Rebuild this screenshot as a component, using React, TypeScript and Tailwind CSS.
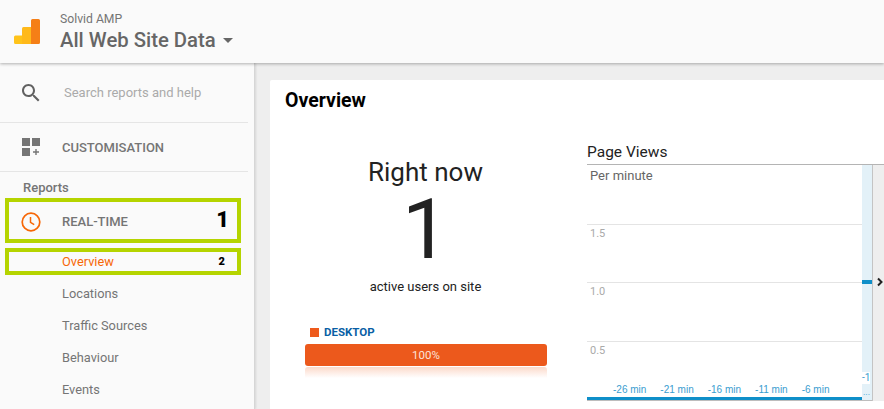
import React from 'react';

const subItems = ['Locations', 'Traffic Sources', 'Behaviour', 'Events'];
const ticks = ['-26 min', '-21 min', '-16 min', '-11 min', '-6 min'];

const Logo = () => (
  <svg width="26" height="26" viewBox="0 0 26 26" className="shrink-0">
    <path d="M0 18a1.500 1.500 0 0 1 1.500-1.500H9V25H1.500A1.500 1.500 0 0 1 0 23.500z" fill="#ffc31a" />
    <path d="M8 9.500A1.500 1.500 0 0 1 9.500 8H17v17H8z" fill="#ffb91a" />
    <path d="M17 1.500A1.500 1.500 0 0 1 18.500 0h6A1.500 1.500 0 0 1 26 1.500v22a1.500 1.500 0 0 1-1.500 1.500H17z" fill="#f57f17" />
  </svg>
);

const SearchIcon = () => (
  <svg width="24" height="24" viewBox="0 0 24 24" fill="#616161" className="shrink-0">
    <path d="M15.500 14h-.79l-.28-.27C15.410 12.590 16 11.110 16 9.500 16 5.910 13.090 3 9.500 3S3 5.910 3 9.500 5.910 16 9.500 16c1.610 0 3.090-.59 4.230-1.570l.27.28v.79l5 4.990L20.490 19l-4.990-5zm-6 0C7.010 14 5 11.990 5 9.500S7.010 5 9.500 5 14 7.010 14 9.500 11.990 14 9.500 14z" />
  </svg>
);

const CustomIcon = () => (
  <svg width="18" height="18" viewBox="0 0 18 18" className="shrink-0">
    <rect x="0" y="0" width="8" height="8" fill="#757575" />
    <rect x="10" y="0" width="8" height="8" fill="#757575" />
    <rect x="0" y="10" width="8" height="8" fill="#757575" />
    <path d="M13.300 11h1.400v2.300H17v1.400h-2.300V17h-1.400v-2.300H11v-1.400h2.300z" fill="#757575" />
  </svg>
);

const ClockIcon = () => (
  <svg width="20" height="20" viewBox="0 0 20 20" fill="none" stroke="#f76707" className="shrink-0">
    <circle cx="10" cy="10" r="8.800" strokeWidth="1.700" />
    <path d="M9.500 5v5.300l3.700 2.300" strokeWidth="1.500" />
  </svg>
);

const Chart = () => (
  <div className="relative flex-1 min-w-0 h-[236px] border-b border-b-[#bdbdbd] bg-white">
    <span className="absolute left-[3px] top-[3px] text-[13px] leading-4 text-[#666]">Per minute</span>
    {[
      { top: 59, label: '1.5' },
      { top: 117, label: '1.0' },
      { top: 176, label: '0.5' },
    ].map((g) => (
      <div key={g.label} className="absolute left-0 right-0 border-t border-[#e4e4e4]" style={{ top: g.top }}>
        <span className="absolute left-[3px] top-[1px] text-[11px] leading-4 text-[#aaa]">{g.label}</span>
      </div>
    ))}
    <div className="absolute right-0 top-0 bottom-0 w-[10px] bg-[#e3f1f8]">
      <div className="absolute left-0 right-0 top-[115px] h-1 bg-[#0f8fc9]" />
      <span className="absolute left-0 top-[207px] bg-white text-[10px] leading-3 text-[#3a9dd0]">-1</span>
      <span className="absolute left-[1px] top-[221px] text-[9px] leading-3 text-[#3a9dd0]">...</span>
    </div>
    <div className="absolute left-[26px] bottom-[4px] flex gap-[14px] text-[10px] leading-3 text-[#3a9dd0] font-['Liberation_Sans',sans-serif]">
      {ticks.map((t) => (
        <span key={t}>{t}</span>
      ))}
    </div>
    <div className="absolute left-0 right-[10px] bottom-0 h-[3px] bg-[#0f8fc9]" />
  </div>
);

export default function App() {
  return (
    <div className="w-[884px] h-[409px] overflow-hidden flex flex-col bg-[#eeeeee] font-['Roboto',sans-serif]">
      <header className="relative z-10 h-[63px] shrink-0 flex items-center pl-[14px] gap-[20px] bg-[#fafafa] shadow-[0_1px_3px_rgba(0,0,0,0.3)]">
        <Logo />
        <div className="flex flex-col mt-[1px]">
          <span className="text-[12.200px] leading-[14px] text-[#757575]">Solvid AMP</span>
          <div className="flex items-center gap-[7px] mt-[2px]">
            <span className="text-[20.300px] leading-6 font-medium text-[#666]">All Web Site Data</span>
            <span className="mt-[1px] w-0 h-0 border-x-[5px] border-x-transparent border-t-[5px] border-t-[#666]" />
          </div>
        </div>
      </header>

      <div className="flex flex-1 min-h-0">
        <aside className="w-[255px] shrink-0 bg-[#fafafa] border-r border-[#d6d6d6] shadow-[1px_0_2px_rgba(0,0,0,0.1)]">
          <div className="h-[60px] flex items-center pl-[19px] gap-[21px] border-b border-[#e5e5e5] mr-[6px]">
            <SearchIcon />
            <span className="text-[13px] text-[#aaa]">Search reports and help</span>
          </div>
          <div className="h-[49px] flex items-center pl-[22px] gap-[22px] border-b border-[#e5e5e5] mr-[6px]">
            <CustomIcon />
            <span className="mt-[2px] text-[13px] font-medium text-[#757575]">CUSTOMISATION</span>
          </div>
          <div className="pl-[23px] pt-[8px] text-[13px] leading-4 font-medium text-[#757575]">Reports</div>
          <div className="ml-[5px] w-[236px] mt-[2px] h-[45px] flex items-center border-4 border-[#b5d400] pl-[12px] pr-[8px]">
            <span className="mt-[2px]">
              <ClockIcon />
            </span>
            <span className="ml-[21px] mt-[2px] text-[13px] font-medium text-[#757575]">REAL-TIME</span>
            <span className="ml-auto mb-[2px] text-[22px] leading-6 font-black text-black">1</span>
          </div>
          <div className="ml-[5px] w-[236px] mt-[5px] h-[27px] flex items-center border-4 border-[#b5d400] pl-[53px] pr-[12px]">
            <span className="text-[12.800px] text-[#f76707]">Overview</span>
            <span className="ml-auto text-[11px] leading-3 font-black text-black">2</span>
          </div>
          <div className="pl-[62px] pt-[3px]">
            {subItems.map((s) => (
              <div key={s} className="h-[32px] flex items-center text-[12.800px] text-[#757575]">
                {s}
              </div>
            ))}
          </div>
        </aside>

        <main className="flex-1 min-w-0 pl-[15px] pt-[17px]">
          <div className="h-[340px] bg-white rounded-tl-[2px] flex flex-col">
            <h1 className="pl-[15px] pt-[10px] text-[19.500px] leading-[22px] font-bold text-black">Overview</h1>
            <div className="flex mt-[25px]">
              <section className="w-[317px] shrink-0 flex flex-col">
                <div className="w-[311px] mt-[19px] text-center text-[26px] leading-8 text-[#222]">Right now</div>
                <div className="w-[311px] text-center text-[84px] leading-[84px] text-[#222]">1</div>
                <div className="w-[311px] mt-[7px] text-center text-[13px] leading-4 text-[#222]">active users on site</div>
                <div className="mt-[31px] ml-[40px] flex items-center gap-[5px]">
                  <span className="w-[9px] h-[9px] bg-[#ee5a1c]" />
                  <span className="text-[11.500px] leading-3 font-bold text-[#0a5fa5]">DESKTOP</span>
                </div>
                <div className="relative ml-[35px] mt-[6px] w-[242px] h-[22px] rounded-[3px] bg-[#ec591c] text-center text-[11.500px] leading-[22px] text-[#fbe3d8]">
                  100%
                  <div className="absolute left-0 right-0 top-[23px] h-[11px] rounded-t-[3px] bg-gradient-to-b from-[#fbd9ca] to-white" />
                </div>
              </section>
              <section className="flex-1 min-w-0 mt-[5px]">
                <div className="text-[15.500px] leading-5 text-[#222] mb-[2px]">Page Views</div>
                <div className="flex border-t border-[#b4b4b4]">
                  <Chart />
                  <div className="w-[12px] shrink-0 bg-[#eeeeee] border-l border-[#c4c4c4] pl-[3px] pt-[112px]">
                    <svg width="8" height="10" viewBox="0 0 8 10" fill="none" stroke="#222" strokeWidth="2">
                      <path d="M2 1.500 5.500 5 2 8.500" />
                    </svg>
                  </div>
                </div>
              </section>
            </div>
          </div>
        </main>
      </div>
    </div>
  );
}
